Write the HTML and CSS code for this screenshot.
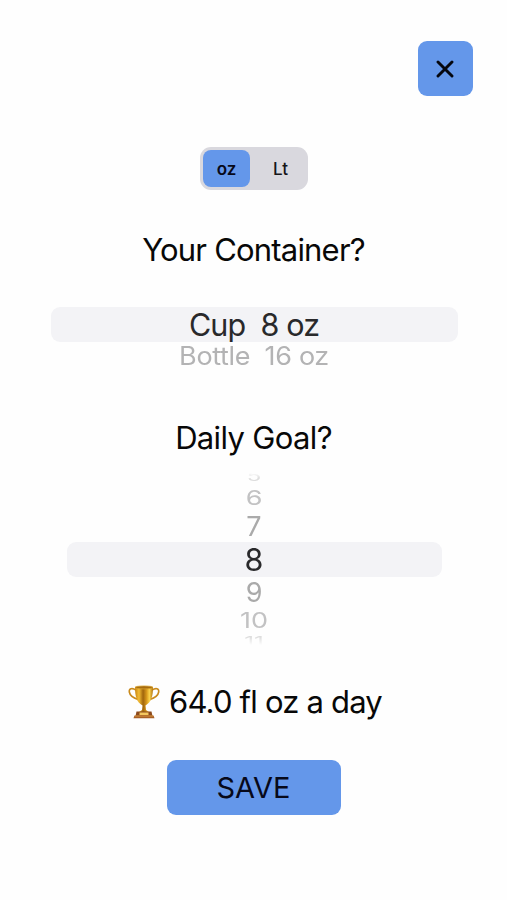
FILE: index.html
```html
<!DOCTYPE html>
<html lang="en">
<head>
<meta charset="utf-8">
<title>Water Goal</title>
<link rel="stylesheet" href="styles.css">
</head>
<body>
<main class="screen">
  <header class="top">
    <button class="close" aria-label="Close">
      <svg width="18" height="18" viewBox="0 0 18 18"><path d="M2 2L16 16M16 2L2 16"/></svg>
    </button>
  </header>
  <div class="segment">
    <button class="unit active">oz</button>
    <button class="unit">Lt</button>
  </div>
  <h1 class="title container-title"><span>Your Container?</span></h1>
  <div class="picker containers">
    <div class="row selected"><span class="cup">Cup&nbsp; 8 oz</span></div>
    <div class="row below"><span class="bottle">Bottle&nbsp; 16 oz</span></div>
  </div>
  <h1 class="title goal-title"><span>Daily Goal?</span></h1>
  <div class="picker goals">
    <div class="row n5"><span>5</span></div>
    <div class="row n6"><span>6</span></div>
    <div class="row n7"><span>7</span></div>
    <div class="row selected"><span>8</span></div>
    <div class="row n9"><span>9</span></div>
    <div class="row n10"><span>10</span></div>
    <div class="row n11"><span>11</span></div>
  </div>
  <div class="total">
    <svg class="trophy" width="32" height="34" viewBox="0 0 32 34">
      <defs>
        <linearGradient id="gold"><stop offset="0" stop-color="#c8840f"/><stop offset=".22" stop-color="#f2bc35"/><stop offset=".45" stop-color="#a0650c"/><stop offset=".65" stop-color="#d99a1c"/><stop offset=".8" stop-color="#fbd34c"/><stop offset="1" stop-color="#b07210"/></linearGradient>
      </defs>
      <path d="M8 5C4 2.500 .8 3.500 1.300 7C2 11 5.500 13 10 14.500M24 5C28 2.500 31.200 3.500 30.700 7C30 11 26.500 13 22 14.500" fill="none" stroke="#c98a1c" stroke-width="1.600"/>
      <path d="M7 2C7 11 8.500 17 14.500 20.500L14 25L11 27H21L18 25L17.500 20.500C23.500 17 25 11 25 2Z" fill="url(#gold)"/>
      <ellipse cx="16" cy="2.400" rx="9" ry="1.500" fill="#a66c10" stroke="#e0a82e" stroke-width=".7"/>
      <path d="M8.500 26.500H23.500L24.500 31H7.500Z" fill="#8c4a1c"/>
      <path d="M11.500 27.500H20.500V30H11.500Z" fill="#f4c85e"/>
      <path d="M6.500 30.500H25.500L26.500 33.300H5.500Z" fill="#a85f25"/>
      <path d="M7 31H25" stroke="#e2a345" stroke-width=".8"/>
    </svg>
    <span>64.0 fl oz a day</span>
  </div>
  <button class="save"><span>SAVE</span></button>
</main>
</body>
</html>
```
FILE: styles.css
```css
* { box-sizing: border-box; }
body { margin: 0; background: #fefefe; color: #080808; font-family: Inter, sans-serif; }
button { border: 0; padding: 0; margin: 0; font: inherit; color: #07091a; background: none; }
.screen { display: flex; flex-direction: column; align-items: center; width: 507px; height: 900px; padding-top: 41px; overflow: hidden; }
.top { display: flex; justify-content: flex-end; width: 100%; padding-right: 34.5px; }
.close { display: flex; align-items: center; justify-content: center; width: 55px; height: 55px; border-radius: 9px; background: #6497ea; }
.close svg { fill: none; stroke: #05070f; stroke-width: 2.9; stroke-linecap: round; }
.segment { display: flex; width: 108px; height: 43px; margin: 51px 0 0 1px; padding: 3px; border-radius: 11px; background: #d9d8de; }
.unit { flex: none; width: 47px; height: 37px; font-size: 17px; font-weight: 500; }
.unit + .unit { width: 55px; margin-left: 3px; color: #151518; }
.unit.active { border-radius: 8px; background: #6497ea; font-weight: 600; }
.title { display: flex; align-items: center; justify-content: center; height: 40px; margin: 0; padding-bottom: 2px; font-size: 31px; font-weight: 400; letter-spacing: -.8px; white-space: nowrap; }
.container-title { margin-top: 40px; }
.goal-title { margin-top: 44px; letter-spacing: -.65px; }
.picker { display: flex; flex-direction: column; align-items: center; white-space: nowrap; }
.row { display: flex; flex: none; align-items: center; justify-content: center; font-size: 27px; line-height: 1; color: #b3b3b4; }
.row span { display: block; }
.row.selected { width: 100%; height: 35px; border-radius: 9px; background: #f3f3f6; color: #29292b; font-size: 30.5px; }
.row.selected span { padding-top: 1px; }
.cup { letter-spacing: -.9px; }
.containers { width: 407px; height: 67px; margin: 37px 0 0 1px; }
.below { height: 28px; padding-top: 1px; }
.goals { width: 375px; height: 188px; margin: 8px 0 0 1px; -webkit-mask-image: linear-gradient(transparent 7px, #000 12px, #000 171px, transparent 179px); mask-image: linear-gradient(transparent 7px, #000 12px, #000 171px, transparent 179px); }
.row.n5 { height: 19px; color: #ddd; font-size: 24px; }
.n6 { height: 28px; color: #c2c2c3; }
.n7 { height: 29px; color: #aaa; }
.n9 { height: 30px; color: #aaa; }
.n10 { height: 27px; color: #c2c2c3; }
.row.n11 { height: 14px; color: #ddd; font-size: 24px; }
.n5 span { transform: translateY(1px) scaleY(.55); }
.n11 span { transform: translateY(1px) scaleY(.55); }
.n6 span { transform: translateY(-1.5px) scaleY(.76); }
.n10 span { transform: scaleY(.79); }
.n7 span { transform: translateY(-.5px) scaleY(.98); }
.bottle { letter-spacing: -.35px; transform: scaleY(.93); }
.total { display: flex; align-items: center; gap: 9px; height: 40px; margin-top: 28px; padding-left: 3px; font-size: 31px; letter-spacing: -.8px; white-space: nowrap; }
.trophy { margin-bottom: 1px; }
.total span { padding-bottom: 2px; }
.save { width: 174px; height: 55px; margin-top: 38px; border-radius: 9px; background: #6497ea; font-size: 29px; }
```
